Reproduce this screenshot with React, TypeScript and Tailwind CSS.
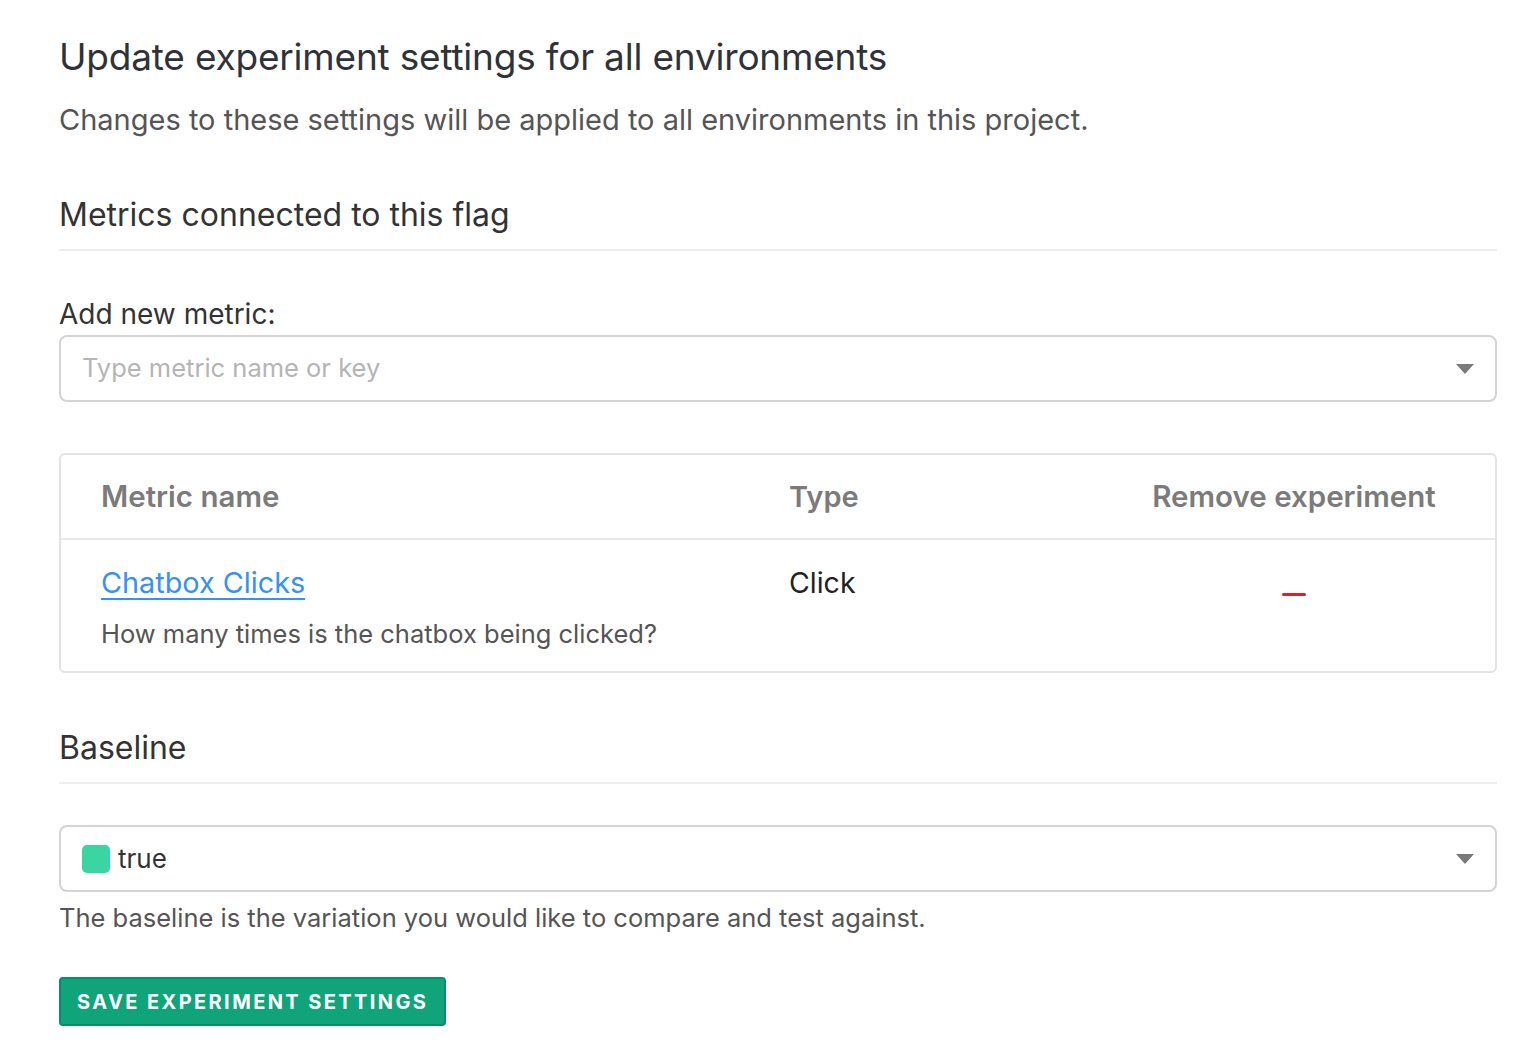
import React from 'react';

const Caret: React.FC = () => (
  <svg width="20" height="12" viewBox="0 0 20 12" className="shrink-0">
    <path d="M1 1 L19 1 L10 11 Z" fill="#7a7a7a" />
  </svg>
);

export default function App() {
  return (
    <div className="min-h-screen bg-white text-[#333] pl-[59px] pr-[21px] pt-[30px]" style={{ fontFamily: 'Inter, "Noto Sans", sans-serif' }}>
      <h1 className="text-[37px] leading-[54px] text-[#2f3337] tracking-[-0.2px]">Update experiment settings for all environments</h1>
      <p className="text-[29px] leading-[42px] text-[#555] mt-[15px]">
        Changes to these settings will be applied to all environments in this project.
      </p>

      <h2 className="text-[32px] leading-[48px] text-[#333] mt-[50px] pb-[10px] border-b-2 border-[#eeeeee]">
        Metrics connected to this flag
      </h2>

      <label className="block text-[28px] leading-[42px] text-[#333] mt-[42px]">Add new metric:</label>
      <div className="h-[67px] border-2 border-[#d4d4d4] rounded-[8px] flex items-center justify-between pl-[21px] pr-[20px]">
        <span className="text-[25.5px] text-[#b5b5b5]">Type metric name or key</span>
        <Caret />
      </div>

      <div className="mt-[51px] border-2 border-[#e1e3e6] rounded-[6px]">
        <div className="grid grid-cols-[688px_1fr_364px] h-[85px] items-center border-b-2 border-[#e8e9eb] pl-[40px]">
          <span className="text-[29.5px] font-semibold text-[#7b7b7b]">Metric name</span>
          <span className="text-[29px] font-semibold text-[#7b7b7b]">Type</span>
          <span className="text-[29.5px] font-semibold text-[#7b7b7b] text-center pr-[38px] whitespace-nowrap">Remove experiment</span>
        </div>
        <div className="grid grid-cols-[688px_1fr_364px] pl-[40px] pt-[22px] pb-[19px]">
          <div>
            <a href="#" className="text-[28.8px] leading-[42px] text-[#3592f5] underline underline-offset-[5px] decoration-2">Chatbox Clicks</a>
            <p className="text-[25.5px] leading-[36px] text-[#555] mt-[12px]">How many times is the chatbox being clicked?</p>
          </div>
          <span className="text-[28.5px] leading-[42px] text-[#222]">Click</span>
          <div className="flex justify-center pr-[38px] pt-[31px]">
            <span className="block w-[24px] h-[3px] rounded-full bg-[#d3242b]" />
          </div>
        </div>
      </div>

      <h2 className="text-[32px] leading-[48px] text-[#333] mt-[51px] pb-[10px] border-b-2 border-[#eeeeee]">Baseline</h2>

      <div className="mt-[41px] h-[67px] border-2 border-[#d4d4d4] rounded-[8px] flex items-center justify-between pl-[21px] pr-[20px]">
        <span className="flex items-center gap-[8px]">
          <span className="w-[28px] h-[28px] rounded-[5px] bg-[#3ad6a1]" />
          <span className="text-[26px] text-[#333]">true</span>
        </span>
        <Caret />
      </div>
      <p className="text-[25.5px] leading-[36px] text-[#555] mt-[8px]">
        The baseline is the variation you would like to compare and test against.
      </p>

      <button className="mt-[41px] h-[49px] px-[16px] bg-[#0fa47a] rounded-[4px] text-white text-[20px] font-bold tracking-[2.4px] uppercase border-2 border-[#0b8d68]">
        Save experiment settings
      </button>
    </div>
  );
}
